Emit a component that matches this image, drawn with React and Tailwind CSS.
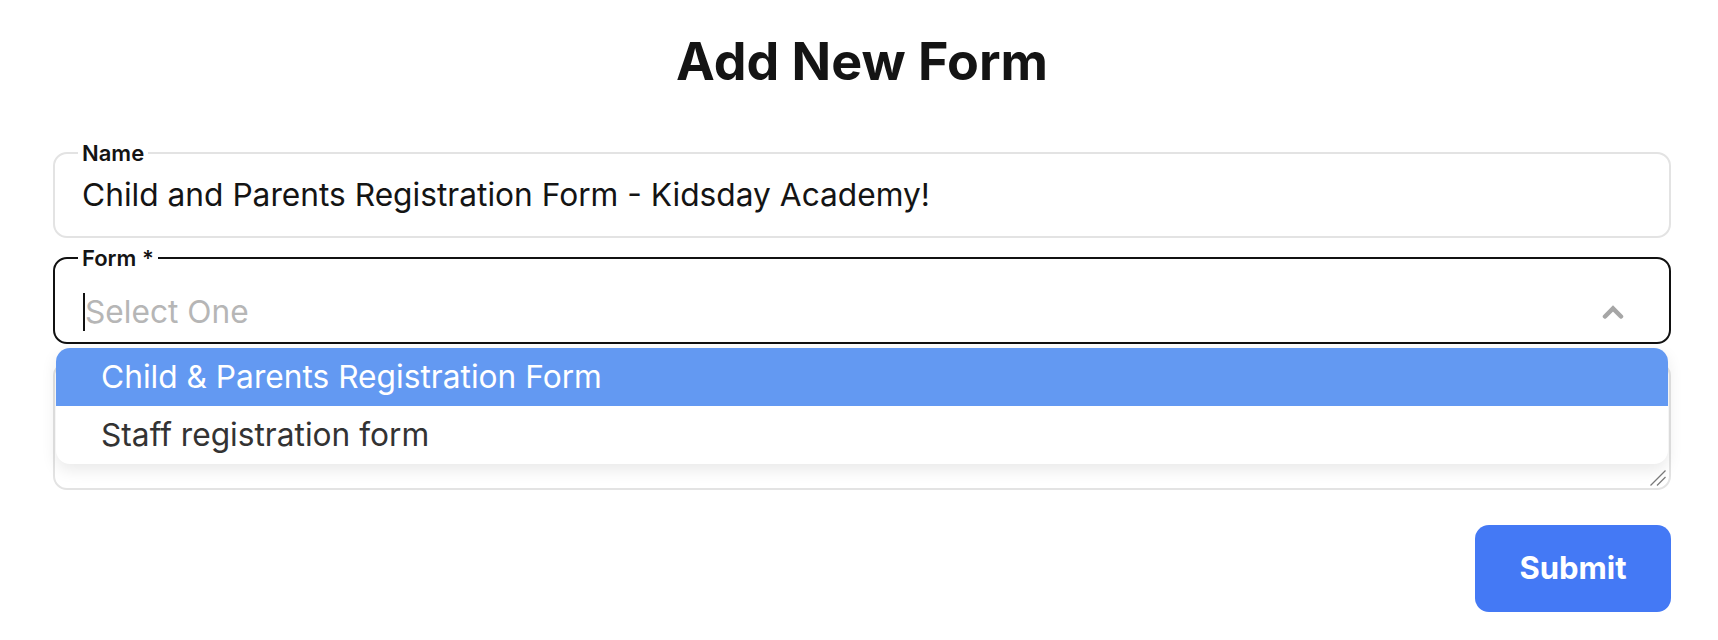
import { useState } from 'react';

// chevron drawn to match the thick grey caret in the select
function ChevronUp() {
  return (
    <svg width="22" height="16" viewBox="0 0 22 16" fill="none">
      <polyline points="3,12.5 11,4.5 19,12.5" stroke="#a6a6a6" strokeWidth="4.5" strokeLinecap="round" strokeLinejoin="miter" />
    </svg>
  );
}

function ResizeHandle() {
  return (
    <svg width="16" height="16" viewBox="0 0 16 16" className="absolute right-[3px] bottom-[2px]">
      <line x1="15.5" y1="0.5" x2="0.5" y2="15.5" stroke="#7a7a7a" strokeWidth="1.3" />
      <line x1="15.5" y1="7" x2="7" y2="15.5" stroke="#7a7a7a" strokeWidth="1.3" />
    </svg>
  );
}

const options = ['Child & Parents Registration Form', 'Staff registration form'];

export default function App() {
  const [name, setName] = useState('Child and Parents Registration Form - Kidsday Academy!');
  const [active] = useState(0);

  return (
    <div className="min-h-screen bg-white font-['Inter','Noto_Sans',sans-serif] text-[#141414]">
      <div className="pl-[53px] pr-[47px] pt-[36px]">
        <h1 className="text-center text-[52px] leading-none font-bold">Add New Form</h1>

        {/* Name */}
        <fieldset className="mt-[53px] border-2 border-[#e3e3e3] rounded-[14px] px-[23px] pt-[12px] pb-[23px]">
          <legend className="px-[4px] text-[22px] leading-[24px] font-semibold">Name</legend>
          <input
            value={name}
            onChange={(e) => setName(e.target.value)}
            className="block w-full h-[36px] px-[4px] text-[31.7px] leading-[36px] text-[#141414] outline-none bg-transparent"
          />
        </fieldset>

        {/* Form select (open) */}
        <div className="relative mt-[8px]">
          <fieldset className="border-2 border-[#111] rounded-[14px] px-[23px] pt-[24px] pb-[12px]">
            <legend className="px-[4px] text-[22px] leading-[24px] font-semibold">Form *</legend>
            <div className="flex items-center h-[36px]">
              <span className="w-[2px] h-[38px] bg-[#111] ml-[5px] shrink-0" />
              <span className="text-[31.7px] leading-[36px] text-[#b6b6b6]">Select One</span>
              <span className="ml-auto mr-[22px] flex items-center">
                <ChevronUp />
              </span>
            </div>
          </fieldset>

          <ul className="absolute z-10 left-[3px] right-[3px] top-[calc(100%+4px)] bg-white rounded-[14px] overflow-hidden shadow-[0_6px_16px_rgba(0,0,0,0.09)]">
            {options.map((o, i) => (
              <li
                key={o}
                className={`h-[58px] flex items-center pl-[45px] text-[31.7px] ${i === active ? 'bg-[#6399f2] text-white' : 'text-[#333]'}`}
              >
                {o}
              </li>
            ))}
          </ul>
        </div>

        {/* Description (covered by the menu) */}
        <fieldset className="relative mt-[7px] border-2 border-[#e3e3e3] rounded-[14px] px-[23px] pt-[10px] pb-[10px]">
          <legend className="px-[4px] text-[22px] leading-[24px] font-semibold">Description</legend>
          <div className="h-[93px]" />
          <ResizeHandle />
        </fieldset>

        <div className="flex justify-end mt-[35px]">
          <button className="w-[196px] h-[87px] rounded-[14px] bg-[#4479f5] text-white text-[31px] font-bold">
            Submit
          </button>
        </div>
      </div>
    </div>
  );
}
